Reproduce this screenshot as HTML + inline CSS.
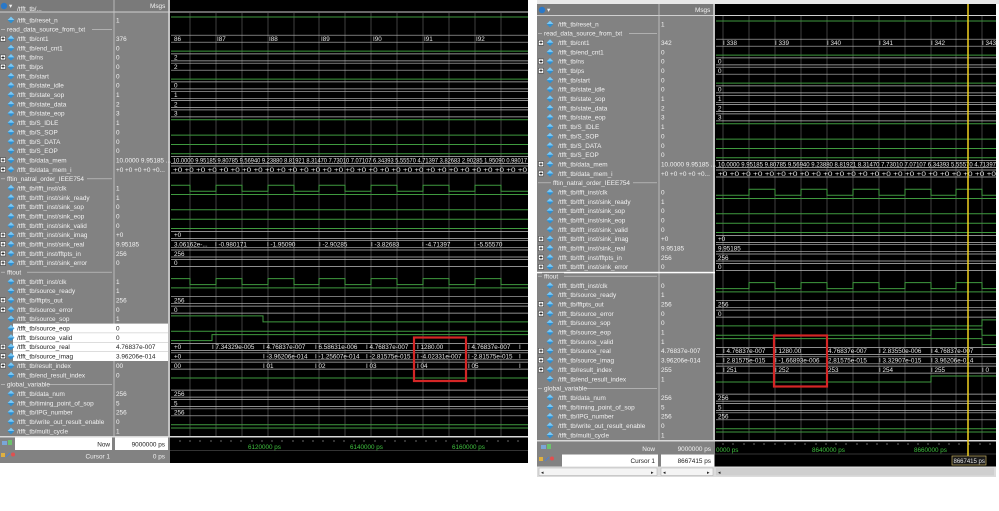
<!DOCTYPE html>
<html><head><meta charset="utf-8">
<style>
html,body{margin:0;padding:0;background:#fff;width:999px;height:511px;overflow:hidden}
svg{position:absolute;top:0}
.n{font:6.4px "Liberation Sans",sans-serif;fill:#f2f2f2}
.nb{font:6.4px "Liberation Sans",sans-serif;fill:#222}
.w{font:6.3px "Liberation Sans",sans-serif;fill:#e6e6e6}
.t{font:6.3px "Liberation Sans",sans-serif;fill:#3fc03f}
.g{stroke:#3f9a3f;stroke-width:1;fill:none}
.b{stroke:#bdbdbd;stroke-width:.7}
.gr{stroke:#6a6a6a;stroke-width:.6}
</style></head><body>

<!-- LEFT PANEL -->
<svg width="530" height="466" style="left:0">
<defs>
<g id="d"><polygon points="0,-3.4 3.4,0 0,3.4 -3.4,0" fill="#2f8fd0"/><polygon points="0,-3.4 3.4,0 0,0 -3.4,0" fill="#7cc8f4"/></g>
<g id="p"><rect x="-2.5" y="-2.5" width="5" height="5" fill="#fff" stroke="#333" stroke-width=".5"/><path d="M-1.6 0H1.6M0 -1.6V1.6" stroke="#000" stroke-width=".7"/></g>
</defs>
<rect x="0" y="0" width="170" height="463" fill="#828282"/>
<rect x="170" y="0" width="358" height="463" fill="#000"/>
<rect x="0" y="0" width="170" height="12" fill="#7a7a7a"/>
<circle cx="4" cy="6" r="3.2" fill="#2a78c8"/><text x="9" y="8" class="n">▾</text>
<text x="150" y="8" class="n">Msgs</text>
<line x1="0" y1="12" x2="528" y2="12" stroke="#d0d0d0" stroke-width="1"/>
<line x1="114" y1="0" x2="114" y2="463" stroke="#c8c8c8" stroke-width=".8"/>
<line x1="169" y1="0" x2="169" y2="463" stroke="#d8d8d8" stroke-width="1.5"/>
<!-- white rows -->
<rect x="13" y="323.6" width="155" height="37.4" fill="#fff"/>
<line x1="13" y1="332.9" x2="168" y2="332.9" stroke="#bbb" stroke-width=".5"/>
<line x1="13" y1="342.3" x2="168" y2="342.3" stroke="#bbb" stroke-width=".5"/>
<line x1="13" y1="351.6" x2="168" y2="351.6" stroke="#bbb" stroke-width=".5"/>

<!-- gridlines -->
<g class="gr">
<line x1="190" y1="13" x2="190" y2="437"/><line x1="216" y1="13" x2="216" y2="437"/><line x1="242" y1="13" x2="242" y2="437"/><line x1="268" y1="13" x2="268" y2="437"/><line x1="294" y1="13" x2="294" y2="437"/><line x1="319" y1="13" x2="319" y2="437"/><line x1="345" y1="13" x2="345" y2="437"/><line x1="371" y1="13" x2="371" y2="437"/><line x1="397" y1="13" x2="397" y2="437"/><line x1="423" y1="13" x2="423" y2="437"/><line x1="449" y1="13" x2="449" y2="437"/><line x1="475" y1="13" x2="475" y2="437"/><line x1="501" y1="13" x2="501" y2="437"/>
</g>

<!-- names -->
<g>
<text x="17" y="11" class="n">/tfft_tb/...</text>
<use href="#d" x="11" y="20"/><text x="17" y="22.3" class="n">/tfft_tb/reset_n</text><text x="116" y="22.3" class="n">1</text>
<line x1="1" y1="29.4" x2="112" y2="29.4" stroke="#ccc" stroke-width=".6"/><rect x="5" y="26" width="87" height="7" fill="#828282"/><text x="7" y="31.7" class="n">read_data_source_from_txt</text>
<use href="#p" x="3" y="38.7"/><use href="#d" x="11" y="38.7"/><text x="17" y="41" class="n">/tfft_tb/cnt1</text><text x="116" y="41" class="n">376</text>
<use href="#d" x="11" y="48.1"/><text x="17" y="50.4" class="n">/tfft_tb/end_cnt1</text><text x="116" y="50.4" class="n">0</text>
<use href="#p" x="3" y="57.4"/><use href="#d" x="11" y="57.4"/><text x="17" y="59.7" class="n">/tfft_tb/ns</text><text x="116" y="59.7" class="n">0</text>
<use href="#p" x="3" y="66.7"/><use href="#d" x="11" y="66.7"/><text x="17" y="69" class="n">/tfft_tb/ps</text><text x="116" y="69" class="n">0</text>
<use href="#d" x="11" y="76.1"/><text x="17" y="78.4" class="n">/tfft_tb/start</text><text x="116" y="78.4" class="n">0</text>
<use href="#d" x="11" y="85.4"/><text x="17" y="87.7" class="n">/tfft_tb/state_idle</text><text x="116" y="87.7" class="n">0</text>
<use href="#d" x="11" y="94.8"/><text x="17" y="97.1" class="n">/tfft_tb/state_sop</text><text x="116" y="97.1" class="n">1</text>
<use href="#d" x="11" y="104.1"/><text x="17" y="106.4" class="n">/tfft_tb/state_data</text><text x="116" y="106.4" class="n">2</text>
<use href="#d" x="11" y="113.4"/><text x="17" y="115.7" class="n">/tfft_tb/state_eop</text><text x="116" y="115.7" class="n">3</text>
<use href="#d" x="11" y="122.8"/><text x="17" y="125.1" class="n">/tfft_tb/S_IDLE</text><text x="116" y="125.1" class="n">1</text>
<use href="#d" x="11" y="132.1"/><text x="17" y="134.4" class="n">/tfft_tb/S_SOP</text><text x="116" y="134.4" class="n">0</text>
<use href="#d" x="11" y="141.5"/><text x="17" y="143.8" class="n">/tfft_tb/S_DATA</text><text x="116" y="143.8" class="n">0</text>
<use href="#d" x="11" y="150.8"/><text x="17" y="153.1" class="n">/tfft_tb/S_EOP</text><text x="116" y="153.1" class="n">0</text>
<use href="#p" x="3" y="160.1"/><use href="#d" x="11" y="160.1"/><text x="17" y="162.4" class="n">/tfft_tb/data_mem</text><text x="116" y="162.4" class="n">10.0000 9.95185 ...</text>
<use href="#p" x="3" y="169.5"/><use href="#d" x="11" y="169.5"/><text x="17" y="171.8" class="n">/tfft_tb/data_mem_i</text><text x="116" y="171.8" class="n">+0 +0 +0 +0 +0...</text>
<line x1="1" y1="178.8" x2="112" y2="178.8" stroke="#ccc" stroke-width=".6"/><rect x="5" y="175.4" width="82" height="7" fill="#828282"/><text x="7" y="181.1" class="n">fftin_natral_order_IEEE754</text>
<use href="#d" x="11" y="188.2"/><text x="17" y="190.5" class="n">/tfft_tb/tfft_inst/clk</text><text x="116" y="190.5" class="n">1</text>
<use href="#d" x="11" y="197.5"/><text x="17" y="199.8" class="n">/tfft_tb/tfft_inst/sink_ready</text><text x="116" y="199.8" class="n">1</text>
<use href="#d" x="11" y="206.8"/><text x="17" y="209.1" class="n">/tfft_tb/tfft_inst/sink_sop</text><text x="116" y="209.1" class="n">0</text>
<use href="#d" x="11" y="216.2"/><text x="17" y="218.5" class="n">/tfft_tb/tfft_inst/sink_eop</text><text x="116" y="218.5" class="n">0</text>
<use href="#d" x="11" y="225.5"/><text x="17" y="227.8" class="n">/tfft_tb/tfft_inst/sink_valid</text><text x="116" y="227.8" class="n">0</text>
<use href="#p" x="3" y="234.9"/><use href="#d" x="11" y="234.9"/><text x="17" y="237.2" class="n">/tfft_tb/tfft_inst/sink_imag</text><text x="116" y="237.2" class="n">+0</text>
<use href="#p" x="3" y="244.2"/><use href="#d" x="11" y="244.2"/><text x="17" y="246.5" class="n">/tfft_tb/tfft_inst/sink_real</text><text x="116" y="246.5" class="n">9.95185</text>
<use href="#p" x="3" y="253.5"/><use href="#d" x="11" y="253.5"/><text x="17" y="255.8" class="n">/tfft_tb/tfft_inst/fftpts_in</text><text x="116" y="255.8" class="n">256</text>
<use href="#p" x="3" y="262.9"/><use href="#d" x="11" y="262.9"/><text x="17" y="265.2" class="n">/tfft_tb/tfft_inst/sink_error</text><text x="116" y="265.2" class="n">0</text>
<line x1="1" y1="272.2" x2="112" y2="272.2" stroke="#ccc" stroke-width=".6"/><rect x="5" y="268.8" width="22" height="7" fill="#828282"/><text x="7" y="274.5" class="n">fftout</text>
<use href="#d" x="11" y="281.6"/><text x="17" y="283.9" class="n">/tfft_tb/tfft_inst/clk</text><text x="116" y="283.9" class="n">1</text>
<use href="#d" x="11" y="290.9"/><text x="17" y="293.2" class="n">/tfft_tb/source_ready</text><text x="116" y="293.2" class="n">1</text>
<use href="#p" x="3" y="300.2"/><use href="#d" x="11" y="300.2"/><text x="17" y="302.5" class="n">/tfft_tb/fftpts_out</text><text x="116" y="302.5" class="n">256</text>
<use href="#p" x="3" y="309.6"/><use href="#d" x="11" y="309.6"/><text x="17" y="311.9" class="n">/tfft_tb/source_error</text><text x="116" y="311.9" class="n">0</text>
<use href="#d" x="11" y="318.9"/><text x="17" y="321.2" class="n">/tfft_tb/source_sop</text><text x="116" y="321.2" class="n">1</text>
<use href="#d" x="11" y="328.3"/><text x="17" y="330.6" class="nb">/tfft_tb/source_eop</text><text x="116" y="330.6" class="nb">0</text>
<use href="#d" x="11" y="337.6"/><text x="17" y="339.9" class="nb">/tfft_tb/source_valid</text><text x="116" y="339.9" class="nb">0</text>
<use href="#p" x="3" y="346.9"/><use href="#d" x="11" y="346.9"/><text x="17" y="349.2" class="nb">/tfft_tb/source_real</text><text x="116" y="349.2" class="nb">4.76837e-007</text>
<use href="#p" x="3" y="356.3"/><use href="#d" x="11" y="356.3"/><text x="17" y="358.6" class="nb">/tfft_tb/source_imag</text><text x="116" y="358.6" class="nb">3.96206e-014</text>
<use href="#p" x="3" y="365.6"/><use href="#d" x="11" y="365.6"/><text x="17" y="367.9" class="n">/tfft_tb/result_index</text><text x="116" y="367.9" class="n">00</text>
<use href="#d" x="11" y="375"/><text x="17" y="377.3" class="n">/tfft_tb/end_result_index</text><text x="116" y="377.3" class="n">0</text>
<line x1="1" y1="384.3" x2="112" y2="384.3" stroke="#ccc" stroke-width=".6"/><rect x="5" y="380.9" width="44" height="7" fill="#828282"/><text x="7" y="386.6" class="n">global_variable</text>
<use href="#d" x="11" y="393.6"/><text x="17" y="395.9" class="n">/tfft_tb/data_num</text><text x="116" y="395.9" class="n">256</text>
<use href="#d" x="11" y="403"/><text x="17" y="405.3" class="n">/tfft_tb/timing_point_of_sop</text><text x="116" y="405.3" class="n">5</text>
<use href="#d" x="11" y="412.3"/><text x="17" y="414.6" class="n">/tfft_tb/IPG_number</text><text x="116" y="414.6" class="n">256</text>
<use href="#d" x="11" y="421.7"/><text x="17" y="424" class="n">/tfft_tb/write_out_result_enable</text><text x="116" y="424" class="n">0</text>
<use href="#d" x="11" y="431"/><text x="17" y="433.3" class="n">/tfft_tb/multi_cycle</text><text x="116" y="433.3" class="n">1</text>
</g>

<!-- single-bit waves -->
<g class="g">
<path d="M171 17H528"/>
<path d="M171 51.1H528"/><path d="M171 79.1H528"/>
<path d="M171 119.8H528"/><path d="M171 135.1H528"/><path d="M171 144.5H528"/><path d="M171 153.8H528"/>
<path d="M171 185.2H190V191.2H216V185.2H242V191.2H268V185.2H294V191.2H319V185.2H345V191.2H371V185.2H397V191.2H423V185.2H449V191.2H475V185.2H501V191.2H528"/>
<path d="M171 194.5H528"/><path d="M171 209.8H528"/><path d="M171 219.2H528"/><path d="M171 228.5H528"/>
<path d="M171 278.6H190V284.6H216V278.6H242V284.6H268V278.6H294V284.6H319V278.6H345V284.6H371V278.6H397V284.6H423V278.6H449V284.6H475V278.6H501V284.6H528"/>
<path d="M171 287.9H528"/>
<path d="M171 315.9H263V321.9H528"/>
<path d="M171 331.3H528"/>
<path d="M171 340.6H212V334.6H528"/>
<path d="M171 378H528"/><path d="M171 424.7H528"/><path d="M171 428H528"/>
</g>
<!-- bus lines -->
<g class="b">
<path d="M171 35.2H528M171 42.2H528M171 53.9H528M171 60.9H528M171 63.2H528M171 70.2H528M171 81.9H528M171 88.9H528M171 91.3H528M171 98.3H528M171 100.6H528M171 107.6H528M171 109.9H528M171 116.9H528M171 156.6H528M171 163.6H528M171 166H528M171 173H528M171 231.4H528M171 238.4H528M171 240.7H528M171 247.7H528M171 250H528M171 257H528M171 259.4H528M171 266.4H528M171 296.7H528M171 303.7H528M171 306.1H528M171 313.1H528M171 343.4H528M171 350.4H528M171 352.8H528M171 359.8H528M171 362.1H528M171 369.1H528M171 390.1H528M171 397.1H528M171 399.5H528M171 406.5H528M171 408.8H528M171 415.8H528"/>
</g>
<!-- wave text -->
<g class="w">
<text x="174" y="41">86</text><text x="217" y="41">I87</text><text x="269" y="41">I88</text><text x="321" y="41">I89</text><text x="373" y="41">I90</text><text x="424" y="41">I91</text><text x="476" y="41">I92</text>
<text x="174" y="59.7">2</text><text x="174" y="69">2</text>
<text x="174" y="87.7">0</text><text x="174" y="97.1">1</text><text x="174" y="106.4">2</text><text x="174" y="115.7">3</text>
<text x="173" y="162.4" textLength="354" lengthAdjust="spacingAndGlyphs">10.0000 9.95185 9.80785 9.56940 9.23880 8.81921 8.31470 7.73010 7.07107 6.34393 5.55570 4.71397 3.82683 2.90285 1.95090 0.98017</text>
<text x="173" y="171.8" textLength="354" lengthAdjust="spacingAndGlyphs">+0 +0 +0 +0 +0 +0 +0 +0 +0 +0 +0 +0 +0 +0 +0 +0 +0 +0 +0 +0 +0 +0 +0 +0 +0 +0 +0 +0 +0 +0 +0</text>
<text x="174" y="237.2">+0</text>
<text x="174" y="246.5">3.06162e-...</text><text x="215" y="246.5">I -0.980171</text><text x="267" y="246.5">I -1.95090</text><text x="319" y="246.5">I -2.90285</text><text x="371" y="246.5">I -3.82683</text><text x="422" y="246.5">I -4.71397</text><text x="474" y="246.5">I -5.55570</text>
<text x="174" y="255.8">256</text><text x="174" y="265.2">0</text>
<text x="174" y="302.5">256</text><text x="174" y="311.9">0</text>
<text x="174" y="349.2">+0</text><text x="212" y="349.2">I 7.34329e-005</text><text x="263" y="349.2">I 4.76837e-007</text><text x="315" y="349.2">I 6.58631e-006</text><text x="366" y="349.2">I 4.76837e-007</text><text x="417" y="349.2">I 1280.00</text><text x="468" y="349.2">I 4.76837e-007</text><text x="519" y="349.2">I</text>
<text x="174" y="358.6">+0</text><text x="263" y="358.6">I -3.96206e-014</text><text x="315" y="358.6">I -1.25607e-014</text><text x="366" y="358.6">I -2.81575e-015</text><text x="417" y="358.6">I -4.02331e-007</text><text x="468" y="358.6">I -2.81575e-015</text><text x="519" y="358.6">I</text>
<text x="174" y="367.9">00</text><text x="263" y="367.9">I 01</text><text x="315" y="367.9">I 02</text><text x="366" y="367.9">I 03</text><text x="417" y="367.9">I 04</text><text x="468" y="367.9">I 05</text><text x="519" y="367.9">I</text>
<text x="174" y="395.9">256</text><text x="174" y="405.3">5</text><text x="174" y="414.6">256</text>
</g>
<rect x="414" y="337.5" width="52" height="43.5" fill="none" stroke="#d42626" stroke-width="2.2"/>

<!-- bottom -->
<rect x="0" y="436" width="528" height="1.5" fill="#d8d8d8"/>
<rect x="0" y="437.5" width="170" height="25.5" fill="#828282"/>
<rect x="15" y="437.5" width="97" height="12.5" fill="#fff"/>
<rect x="115" y="437.5" width="53" height="12.5" fill="#fff"/>
<rect x="2" y="441" width="5" height="4" fill="#7aa6d8"/><rect x="8" y="440" width="4" height="5" fill="#6cc26c"/>
<rect x="1" y="453" width="4" height="4" fill="#e0b040"/><path d="M6 457l4-4" stroke="#5080d0" stroke-width="1"/><circle cx="13" cy="454.5" r="2" fill="#e05050"/>
<text x="110" y="446.5" class="nb" text-anchor="end">Now</text>
<text x="165" y="446.5" class="nb" text-anchor="end">9000000 ps</text>
<text x="110" y="458.5" class="n" text-anchor="end">Cursor 1</text>
<text x="165" y="458.5" class="n" text-anchor="end">0 ps</text>
<rect x="170" y="437.5" width="358" height="25.5" fill="#000"/>
<line x1="170" y1="450.5" x2="528" y2="450.5" stroke="#666" stroke-width=".6"/>
<g stroke="#aaa" stroke-width=".6"><path d="M180 440v2M190 440v2M200 440v2M211 440v2M221 440v2M231 440v2M241 440v2M252 440v2M262 440v2M272 440v2M282 440v2M293 440v2M303 440v2M313 440v2M323 440v2M334 440v2M344 440v2M354 440v2M364 440v2M375 440v2M385 440v2M395 440v2M405 440v2M416 440v2M426 440v2M436 440v2M446 440v2M457 440v2M467 440v2M477 440v2M487 440v2M498 440v2M508 440v2M518 440v2"/></g>
<text x="248" y="449" class="t">6120000 ps</text>
<text x="350" y="449" class="t">6140000 ps</text>
<text x="452" y="449" class="t">6160000 ps</text>
</svg>

<!-- RIGHT PANEL -->
<svg width="462" height="480" style="left:537px">
<rect x="0" y="0" width="462" height="4" fill="#e8e8e8"/>
<rect x="0" y="4" width="178" height="462" fill="#828282"/>
<rect x="178" y="4" width="281" height="462" fill="#000"/>
<rect x="0" y="4" width="178" height="11" fill="#7a7a7a"/>
<circle cx="5" cy="10" r="3.2" fill="#2a78c8"/><text x="10" y="12" class="n">▾</text>
<text x="158" y="12" class="n">Msgs</text>
<line x1="0" y1="15.5" x2="459" y2="15.5" stroke="#d0d0d0" stroke-width="1"/>
<line x1="122" y1="4" x2="122" y2="466" stroke="#c8c8c8" stroke-width=".8"/>
<line x1="177" y1="4" x2="177" y2="466" stroke="#d8d8d8" stroke-width="1.5"/>
<g class="gr">
<line x1="186" y1="16" x2="186" y2="441"/><line x1="212" y1="16" x2="212" y2="441"/><line x1="238" y1="16" x2="238" y2="441"/><line x1="264" y1="16" x2="264" y2="441"/><line x1="290" y1="16" x2="290" y2="441"/><line x1="316" y1="16" x2="316" y2="441"/><line x1="342" y1="16" x2="342" y2="441"/><line x1="368" y1="16" x2="368" y2="441"/><line x1="394" y1="16" x2="394" y2="441"/><line x1="419" y1="16" x2="419" y2="441"/><line x1="445" y1="16" x2="445" y2="441"/>
</g>
<g transform="translate(0,4)">
<use href="#d" x="13" y="20"/><text x="21" y="22.3" class="n">/tfft_tb/reset_n</text><text x="124" y="22.3" class="n">1</text>
<line x1="1" y1="29.4" x2="120" y2="29.4" stroke="#ccc" stroke-width=".6"/><rect x="5" y="26" width="87" height="7" fill="#828282"/><text x="7" y="31.7" class="n">read_data_source_from_txt</text>
<use href="#p" x="4" y="38.7"/><use href="#d" x="13" y="38.7"/><text x="21" y="41" class="n">/tfft_tb/cnt1</text><text x="124" y="41" class="n">342</text>
<use href="#d" x="13" y="48.1"/><text x="21" y="50.4" class="n">/tfft_tb/end_cnt1</text><text x="124" y="50.4" class="n">0</text>
<use href="#p" x="4" y="57.4"/><use href="#d" x="13" y="57.4"/><text x="21" y="59.7" class="n">/tfft_tb/ns</text><text x="124" y="59.7" class="n">0</text>
<use href="#p" x="4" y="66.7"/><use href="#d" x="13" y="66.7"/><text x="21" y="69" class="n">/tfft_tb/ps</text><text x="124" y="69" class="n">0</text>
<use href="#d" x="13" y="76.1"/><text x="21" y="78.4" class="n">/tfft_tb/start</text><text x="124" y="78.4" class="n">0</text>
<use href="#d" x="13" y="85.4"/><text x="21" y="87.7" class="n">/tfft_tb/state_idle</text><text x="124" y="87.7" class="n">0</text>
<use href="#d" x="13" y="94.8"/><text x="21" y="97.1" class="n">/tfft_tb/state_sop</text><text x="124" y="97.1" class="n">1</text>
<use href="#d" x="13" y="104.1"/><text x="21" y="106.4" class="n">/tfft_tb/state_data</text><text x="124" y="106.4" class="n">2</text>
<use href="#d" x="13" y="113.4"/><text x="21" y="115.7" class="n">/tfft_tb/state_eop</text><text x="124" y="115.7" class="n">3</text>
<use href="#d" x="13" y="122.8"/><text x="21" y="125.1" class="n">/tfft_tb/S_IDLE</text><text x="124" y="125.1" class="n">1</text>
<use href="#d" x="13" y="132.1"/><text x="21" y="134.4" class="n">/tfft_tb/S_SOP</text><text x="124" y="134.4" class="n">0</text>
<use href="#d" x="13" y="141.5"/><text x="21" y="143.8" class="n">/tfft_tb/S_DATA</text><text x="124" y="143.8" class="n">0</text>
<use href="#d" x="13" y="150.8"/><text x="21" y="153.1" class="n">/tfft_tb/S_EOP</text><text x="124" y="153.1" class="n">0</text>
<use href="#p" x="4" y="160.1"/><use href="#d" x="13" y="160.1"/><text x="21" y="162.4" class="n">/tfft_tb/data_mem</text><text x="124" y="162.4" class="n">10.0000 9.95185 ...</text>
<use href="#p" x="4" y="169.5"/><use href="#d" x="13" y="169.5"/><text x="21" y="171.8" class="n">/tfft_tb/data_mem_i</text><text x="124" y="171.8" class="n">+0 +0 +0 +0 +0...</text>
<line x1="1" y1="178.8" x2="120" y2="178.8" stroke="#ccc" stroke-width=".6"/><rect x="14" y="175.4" width="82" height="7" fill="#828282"/><text x="16" y="181.1" class="n">fftin_natral_order_IEEE754</text>
<use href="#d" x="13" y="188.2"/><text x="21" y="190.5" class="n">/tfft_tb/tfft_inst/clk</text><text x="124" y="190.5" class="n">0</text>
<use href="#d" x="13" y="197.5"/><text x="21" y="199.8" class="n">/tfft_tb/tfft_inst/sink_ready</text><text x="124" y="199.8" class="n">1</text>
<use href="#d" x="13" y="206.8"/><text x="21" y="209.1" class="n">/tfft_tb/tfft_inst/sink_sop</text><text x="124" y="209.1" class="n">0</text>
<use href="#d" x="13" y="216.2"/><text x="21" y="218.5" class="n">/tfft_tb/tfft_inst/sink_eop</text><text x="124" y="218.5" class="n">0</text>
<use href="#d" x="13" y="225.5"/><text x="21" y="227.8" class="n">/tfft_tb/tfft_inst/sink_valid</text><text x="124" y="227.8" class="n">0</text>
<use href="#p" x="4" y="234.9"/><use href="#d" x="13" y="234.9"/><text x="21" y="237.2" class="n">/tfft_tb/tfft_inst/sink_imag</text><text x="124" y="237.2" class="n">+0</text>
<use href="#p" x="4" y="244.2"/><use href="#d" x="13" y="244.2"/><text x="21" y="246.5" class="n">/tfft_tb/tfft_inst/sink_real</text><text x="124" y="246.5" class="n">9.95185</text>
<use href="#p" x="4" y="253.5"/><use href="#d" x="13" y="253.5"/><text x="21" y="255.8" class="n">/tfft_tb/tfft_inst/fftpts_in</text><text x="124" y="255.8" class="n">256</text>
<use href="#p" x="4" y="262.9"/><use href="#d" x="13" y="262.9"/><text x="21" y="265.2" class="n">/tfft_tb/tfft_inst/sink_error</text><text x="124" y="265.2" class="n">0</text>
<rect x="0" y="267.8" width="178" height="1.5" fill="#fff"/>
<line x1="1" y1="272.2" x2="120" y2="272.2" stroke="#ccc" stroke-width=".6"/><rect x="5" y="268.8" width="22" height="7" fill="#828282"/><text x="7" y="274.5" class="n">fftout</text>
<use href="#d" x="13" y="281.6"/><text x="21" y="283.9" class="n">/tfft_tb/tfft_inst/clk</text><text x="124" y="283.9" class="n">0</text>
<use href="#d" x="13" y="290.9"/><text x="21" y="293.2" class="n">/tfft_tb/source_ready</text><text x="124" y="293.2" class="n">1</text>
<use href="#p" x="4" y="300.2"/><use href="#d" x="13" y="300.2"/><text x="21" y="302.5" class="n">/tfft_tb/fftpts_out</text><text x="124" y="302.5" class="n">256</text>
<use href="#p" x="4" y="309.6"/><use href="#d" x="13" y="309.6"/><text x="21" y="311.9" class="n">/tfft_tb/source_error</text><text x="124" y="311.9" class="n">0</text>
<use href="#d" x="13" y="318.9"/><text x="21" y="321.2" class="n">/tfft_tb/source_sop</text><text x="124" y="321.2" class="n">0</text>
<use href="#d" x="13" y="328.3"/><text x="21" y="330.6" class="n">/tfft_tb/source_eop</text><text x="124" y="330.6" class="n">1</text>
<use href="#d" x="13" y="337.6"/><text x="21" y="339.9" class="n">/tfft_tb/source_valid</text><text x="124" y="339.9" class="n">1</text>
<use href="#p" x="4" y="346.9"/><use href="#d" x="13" y="346.9"/><text x="21" y="349.2" class="n">/tfft_tb/source_real</text><text x="124" y="349.2" class="n">4.76837e-007</text>
<use href="#p" x="4" y="356.3"/><use href="#d" x="13" y="356.3"/><text x="21" y="358.6" class="n">/tfft_tb/source_imag</text><text x="124" y="358.6" class="n">3.96206e-014</text>
<use href="#p" x="4" y="365.6"/><use href="#d" x="13" y="365.6"/><text x="21" y="367.9" class="n">/tfft_tb/result_index</text><text x="124" y="367.9" class="n">255</text>
<use href="#d" x="13" y="375"/><text x="21" y="377.3" class="n">/tfft_tb/end_result_index</text><text x="124" y="377.3" class="n">1</text>
<line x1="1" y1="384.3" x2="120" y2="384.3" stroke="#ccc" stroke-width=".6"/><rect x="5" y="380.9" width="44" height="7" fill="#828282"/><text x="7" y="386.6" class="n">global_variable</text>
<use href="#d" x="13" y="393.6"/><text x="21" y="395.9" class="n">/tfft_tb/data_num</text><text x="124" y="395.9" class="n">256</text>
<use href="#d" x="13" y="403"/><text x="21" y="405.3" class="n">/tfft_tb/timing_point_of_sop</text><text x="124" y="405.3" class="n">5</text>
<use href="#d" x="13" y="412.3"/><text x="21" y="414.6" class="n">/tfft_tb/IPG_number</text><text x="124" y="414.6" class="n">256</text>
<use href="#d" x="13" y="421.7"/><text x="21" y="424" class="n">/tfft_tb/write_out_result_enable</text><text x="124" y="424" class="n">0</text>
<use href="#d" x="13" y="431"/><text x="21" y="433.3" class="n">/tfft_tb/multi_cycle</text><text x="124" y="433.3" class="n">1</text>

<g class="g">
<path d="M179 17H459"/>
<path d="M179 51.1H459"/><path d="M179 79.1H459"/>
<path d="M179 119.8H459"/><path d="M179 135.1H459"/><path d="M179 144.5H459"/><path d="M179 153.8H459"/>
<path d="M179 191.2H212V185.2H238V191.2H264V185.2H290V191.2H316V185.2H342V191.2H368V185.2H394V191.2H419V185.2H445V191.2H459"/>
<path d="M179 194.5H459"/><path d="M179 209.8H459"/><path d="M179 219.2H459"/><path d="M179 228.5H459"/>
<path d="M179 284.6H212V278.6H238V284.6H264V278.6H290V284.6H316V278.6H342V284.6H368V278.6H394V284.6H419V278.6H445V284.6H459"/>
<path d="M179 287.9H459"/>
<path d="M179 321.9H445V315.9H459"/>
<path d="M179 331.3H394V325.3H445V331.3H459"/>
<path d="M179 334.6H445V340.6H459"/>
<path d="M179 378H394V372H459"/><path d="M179 424.7H459"/><path d="M179 428H459"/>
</g>
<g class="b">
<path d="M179 35.2H459M179 42.2H459M179 53.9H459M179 60.9H459M179 63.2H459M179 70.2H459M179 81.9H459M179 88.9H459M179 91.3H459M179 98.3H459M179 100.6H459M179 107.6H459M179 109.9H459M179 116.9H459M179 156.6H459M179 163.6H459M179 166H459M179 173H459M179 231.4H459M179 238.4H459M179 240.7H459M179 247.7H459M179 250H459M179 257H459M179 259.4H459M179 266.4H459M179 296.7H459M179 303.7H459M179 306.1H459M179 313.1H459M179 343.4H459M179 350.4H459M179 352.8H459M179 359.8H459M179 362.1H459M179 369.1H459M179 390.1H459M179 397.1H459M179 399.5H459M179 406.5H459M179 408.8H459M179 415.8H459"/>
</g>
<g class="w">
<text x="186" y="41">I 338</text><text x="238" y="41">I 339</text><text x="290" y="41">I 340</text><text x="342" y="41">I 341</text><text x="394" y="41">I 342</text><text x="445" y="41">I 343</text>
<text x="181" y="59.7">0</text><text x="181" y="69">0</text>
<text x="181" y="87.7">0</text><text x="181" y="97.1">1</text><text x="181" y="106.4">2</text><text x="181" y="115.7">3</text>
<text x="181" y="162.4" textLength="278" lengthAdjust="spacingAndGlyphs">10.0000 9.95185 9.80785 9.56940 9.23880 8.81921 8.31470 7.73010 7.07107 6.34393 5.55570 4.71397</text>
<text x="181" y="171.8" textLength="278" lengthAdjust="spacingAndGlyphs">+0 +0 +0 +0 +0 +0 +0 +0 +0 +0 +0 +0 +0 +0 +0 +0 +0 +0 +0 +0 +0 +0 +0 +0</text>
<text x="181" y="237.2">+0</text><text x="181" y="246.5">9.95185</text><text x="181" y="255.8">256</text><text x="181" y="265.2">0</text>
<text x="181" y="302.5">256</text><text x="181" y="311.9">0</text>
<text x="186" y="349.2">I 4.76837e-007</text><text x="238" y="349.2">I 1280.00</text><text x="291" y="349.2">4.76837e-007</text><text x="342" y="349.2">I 2.83550e-006</text><text x="394" y="349.2">I 4.76837e-007</text>
<text x="186" y="358.6">I 2.81575e-015</text><text x="238" y="358.6">I -1.66893e-006</text><text x="291" y="358.6">2.81575e-015</text><text x="342" y="358.6">I 3.32907e-015</text><text x="394" y="358.6">I 3.96206e-014</text>
<text x="186" y="367.9">I 251</text><text x="238" y="367.9">I 252</text><text x="291" y="367.9">253</text><text x="342" y="367.9">I 254</text><text x="394" y="367.9">I 255</text><text x="445" y="367.9">I 0</text>
<text x="181" y="395.9">256</text><text x="181" y="405.3">5</text><text x="181" y="414.6">256</text>
</g>
</g>
<rect x="237" y="335.5" width="53" height="51" fill="none" stroke="#d42626" stroke-width="2.2"/>

<!-- bottom -->
<rect x="0" y="440" width="459" height="1.5" fill="#d8d8d8"/>
<rect x="0" y="441.5" width="178" height="25" fill="#828282"/>
<rect x="25" y="454.5" width="96" height="12" fill="#fff"/>
<rect x="124" y="454.5" width="53" height="12" fill="#fff"/>
<rect x="4" y="445" width="5" height="4" fill="#7aa6d8"/><rect x="10" y="444" width="4" height="5" fill="#6cc26c"/>
<rect x="2" y="457" width="4" height="4" fill="#e0b040"/><path d="M8 461l4-4" stroke="#5080d0" stroke-width="1"/><circle cx="15" cy="458.5" r="2" fill="#e05050"/>
<text x="118" y="451" class="n" text-anchor="end">Now</text>
<text x="174" y="451" class="n" text-anchor="end">9000000 ps</text>
<text x="118" y="463" class="nb" text-anchor="end">Cursor 1</text>
<text x="174" y="463" class="nb" text-anchor="end">8667415 ps</text>
<rect x="178" y="441.5" width="281" height="25" fill="#000"/>
<line x1="178" y1="454" x2="459" y2="454" stroke="#666" stroke-width=".6"/>
<g stroke="#aaa" stroke-width=".6"><path d="M186 443v2M196 443v2M207 443v2M217 443v2M227 443v2M238 443v2M248 443v2M258 443v2M268 443v2M279 443v2M289 443v2M299 443v2M309 443v2M320 443v2M330 443v2M340 443v2M350 443v2M361 443v2M371 443v2M381 443v2M391 443v2M402 443v2M412 443v2M422 443v2M432 443v2M443 443v2M453 443v2"/></g>
<text x="179" y="452" class="t">0000 ps</text>
<text x="275" y="452" class="t">8640000 ps</text>
<text x="377" y="452" class="t">8660000 ps</text>
<line x1="431" y1="4" x2="431" y2="456" stroke="#f0d020" stroke-width="1.5"/>
<rect x="415" y="456" width="34" height="9" fill="#1a1a1a" stroke="#c8b060" stroke-width=".7"/>
<text x="416.5" y="463" class="w" style="font-size:6px">8667415 ps</text>
<!-- scrollbars -->
<rect x="0" y="466.5" width="459" height="10.5" fill="#dcdcdc"/>
<rect x="2" y="468" width="118" height="7.5" fill="#f4f4f4" stroke="#aaa" stroke-width=".5"/>
<rect x="124" y="468" width="52" height="7.5" fill="#f4f4f4" stroke="#aaa" stroke-width=".5"/>
<rect x="179" y="468" width="278" height="7.5" fill="#cfcfcf"/>
<text x="4" y="474" class="nb" style="font-size:5px">◂</text><text x="114" y="474" class="nb" style="font-size:5px">▸</text>
<text x="126" y="474" class="nb" style="font-size:5px">◂</text><text x="170" y="474" class="nb" style="font-size:5px">▸</text>
<text x="181" y="474" class="nb" style="font-size:5px">◂</text>
</svg>
</body></html>
